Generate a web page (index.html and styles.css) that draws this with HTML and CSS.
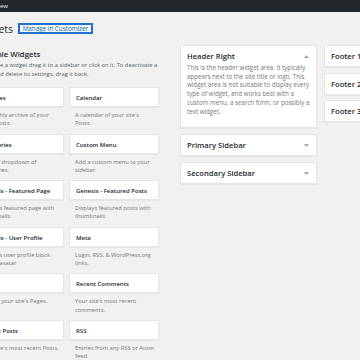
FILE: index.html
```html
<!DOCTYPE html>
<html lang="en">
<head>
  <meta charset="UTF-8">
  <meta name="viewport" content="width=device-width, initial-scale=1.0">
  <title>Widgets</title>
  <link rel="stylesheet" href="styles.css">
</head>
<body>
  <div class="adminbar"><span class="ab-item">ew</span></div>

  <div class="wrap">
    <div class="title-row">
      <h1>Widgets</h1>
      <a href="#" class="page-title-action">Manage in Customizer</a>
    </div>

    <div class="columns">
      <div class="available">
        <h2>Available Widgets</h2>
        <p class="intro">To activate a widget drag it to a sidebar or click on it. To deactivate a widget and delete its settings, drag it back.</p>

        <div class="widget-list">
          <div class="widget"><div class="widget-top">Archives</div><p class="widget-desc">A monthly archive of your site's Posts.</p></div>
          <div class="widget"><div class="widget-top">Calendar</div><p class="widget-desc">A calendar of your site's Posts.</p></div>
          <div class="widget"><div class="widget-top">Categories</div><p class="widget-desc">A list or dropdown of categories.</p></div>
          <div class="widget"><div class="widget-top">Custom Menu</div><p class="widget-desc">Add a custom menu to your sidebar.</p></div>
          <div class="widget"><div class="widget-top">Genesis - Featured Page</div><p class="widget-desc">Displays featured page with thumbnails</p></div>
          <div class="widget"><div class="widget-top">Genesis - Featured Posts</div><p class="widget-desc">Displays featured posts with thumbnails</p></div>
          <div class="widget"><div class="widget-top">Genesis - User Profile</div><p class="widget-desc">Displays user profile block with Gravatar</p></div>
          <div class="widget"><div class="widget-top">Meta</div><p class="widget-desc">Login, RSS, &amp; WordPress.org links.</p></div>
          <div class="widget"><div class="widget-top">Pages</div><p class="widget-desc">A list of your site's Pages.</p></div>
          <div class="widget"><div class="widget-top">Recent Comments</div><p class="widget-desc">Your site's most recent comments.</p></div>
          <div class="widget"><div class="widget-top">Recent Posts</div><p class="widget-desc">Your site's most recent Posts.</p></div>
          <div class="widget"><div class="widget-top">RSS</div><p class="widget-desc">Entries from any RSS or Atom feed.</p></div>
          <div class="widget"><div class="widget-top">Search</div><p class="widget-desc">A search form for your site.</p></div>
          <div class="widget"><div class="widget-top">Tag Cloud</div><p class="widget-desc">A cloud of your most used tags.</p></div>
        </div>
      </div>

      <div class="sidebars">
        <div class="sidebar open">
          <div class="sidebar-name">
            <h3>Header Right</h3>
            <svg class="toggle" width="5" height="3" viewBox="0 0 5 3"><path d="M0 3 L2.5 0 L5 3 Z" fill="#a0a5aa"/></svg>
          </div>
          <p class="sidebar-desc">This is the header widget area. It typically appears next to the site title or logo. This widget area is not suitable to display every type of widget, and works best with a custom menu, a search form, or possibly a text widget.</p>
        </div>
        <div class="sidebar">
          <div class="sidebar-name">
            <h3>Primary Sidebar</h3>
            <svg class="toggle" width="5" height="3" viewBox="0 0 5 3"><path d="M0 0 L2.5 3 L5 0 Z" fill="#a0a5aa"/></svg>
          </div>
        </div>
        <div class="sidebar">
          <div class="sidebar-name">
            <h3>Secondary Sidebar</h3>
            <svg class="toggle" width="5" height="3" viewBox="0 0 5 3"><path d="M0 0 L2.5 3 L5 0 Z" fill="#a0a5aa"/></svg>
          </div>
        </div>
      </div>

      <div class="sidebars footers">
        <div class="sidebar"><div class="sidebar-name"><h3>Footer 1</h3></div></div>
        <div class="sidebar"><div class="sidebar-name"><h3>Footer 2</h3></div></div>
        <div class="sidebar"><div class="sidebar-name"><h3>Footer 3</h3></div></div>
      </div>
    </div>
  </div>
</body>
</html>
```

FILE: styles.css
```css
/* Reset default margin and padding */
* {
  margin: 0;
  padding: 0;
  box-sizing: border-box;
}

body {
  font-family: 'Open Sans', 'Noto Sans', sans-serif;
  background-color: #f1f1f1;
  color: #444;
  width: 360px;
  height: 360px;
  overflow: hidden;
}

/* Admin bar */
.adminbar {
  height: 12px;
  background-color: #23282d;
  display: flex;
  align-items: center;
}

.ab-item {
  font-size: 6px;
  color: #eee;
  line-height: 12px;
}

/* Page */
.wrap {
  margin-left: -26px;
  width: 520px;
}

.title-row {
  display: flex;
  align-items: center;
  margin-top: 11px;
  height: 11px;
}

h1 {
  font-size: 10.5px;
  font-weight: 400;
  line-height: 11px;
  color: #23282d;
  padding-top: 1px;
}

.page-title-action {
  margin-left: 5px;
  height: 11.5px;
  padding: 0 2.5px;
  border: 2px solid #2271d1;
  background-color: #f7f7f7;
  color: #0073aa;
  font-size: 6.3px;
  font-weight: 400;
  line-height: 7.5px;
  text-decoration: none;
}

.columns {
  display: flex;
  align-items: flex-start;
  margin-top: 11px;
}

/* Available widgets */
.available {
  width: 185px;
  margin-right: 21px;
}

h2 {
  font-size: 7.8px;
  font-weight: 600;
  line-height: 10px;
  color: #23282d;
  margin-top: 4px;
}

.intro {
  font-size: 5.8px;
  line-height: 9px;
  color: #555d66;
  margin-top: 2px;
}

.widget-list {
  display: grid;
  grid-template-columns: 90px 90px;
  column-gap: 5px;
  row-gap: 6px;
  margin-top: 8px;
}

.widget-top {
  height: 20px;
  line-height: 20px;
  padding: 0 6px;
  background-color: #fff;
  border: 1px solid #e5e5e5;
  box-shadow: 0 1px 1px rgba(0, 0, 0, 0.04);
  font-size: 6px;
  font-weight: 600;
  color: #23282d;
  white-space: nowrap;
  overflow: hidden;
}

.widget-desc {
  margin: 4px 5px 0 6px;
  font-size: 5.75px;
  line-height: 8.3px;
  height: 16.6px;
  color: #72777c;
}

/* Sidebars */
.sidebars {
  width: 137px;
  flex-shrink: 0;
  display: flex;
  flex-direction: column;
  gap: 6px;
}

.footers {
  margin-left: 7px;
  gap: 5.5px;
}

.sidebar {
  background-color: #fff;
  border: 1px solid #e5e5e5;
  box-shadow: 0 1px 1px rgba(0, 0, 0, 0.04);
}

.sidebar-name {
  height: 20px;
  padding: 0 7px 0 6px;
  display: flex;
  align-items: center;
  justify-content: space-between;
}

.sidebar-name h3 {
  font-size: 7.6px;
  font-weight: 600;
  color: #23282d;
  line-height: 10px;
}

.sidebar.open {
  padding-bottom: 11px;
}

.sidebar.open .sidebar-name {
  height: auto;
  padding-top: 5px;
}

.sidebar-desc {
  margin: 3px 6px 0;
  font-size: 6.2px;
  line-height: 8.7px;
  color: #72777c;
}
```
